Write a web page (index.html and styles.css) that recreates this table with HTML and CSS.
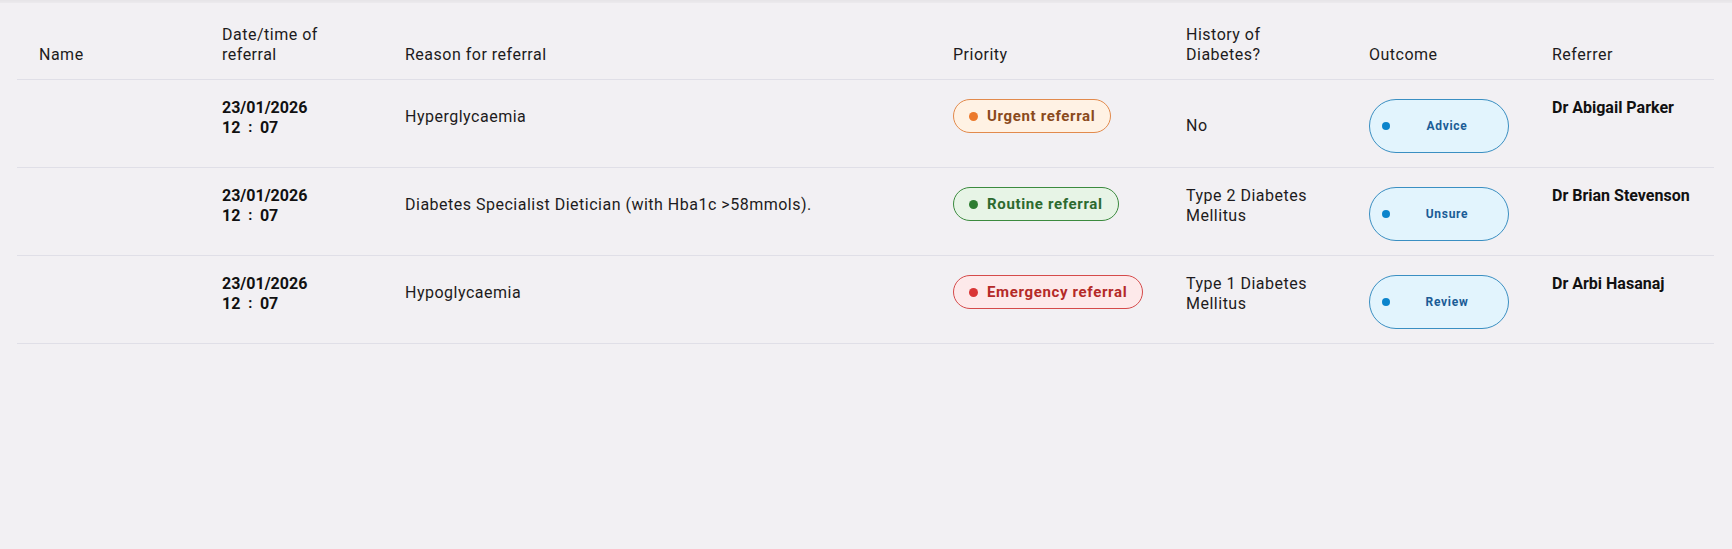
FILE: index.html
```html
<!DOCTYPE html>
<html lang="en">
<head>
<meta charset="utf-8">
<title>Referrals</title>
<link rel="stylesheet" href="styles.css">
</head>
<body>
<div class="topbar"></div>
<div class="table">
  <div class="row head">
    <div class="cell">Name</div>
    <div class="cell">Date/time of referral</div>
    <div class="cell">Reason for referral</div>
    <div class="cell">Priority</div>
    <div class="cell">History of Diabetes?</div>
    <div class="cell">Outcome</div>
    <div class="cell">Referrer</div>
  </div>

  <div class="row">
    <div class="cell"></div>
    <div class="cell date"><div>23/01/2026</div><div>12<span class="colon">:</span>07</div></div>
    <div class="cell reason">Hyperglycaemia</div>
    <div class="cell priority"><span class="pill urgent"><span class="dot"></span>Urgent referral</span></div>
    <div class="cell history single">No</div>
    <div class="cell outcome"><span class="opill"><span class="dot"></span><span class="otext">Advice</span></span></div>
    <div class="cell referrer">Dr Abigail Parker</div>
  </div>

  <div class="row">
    <div class="cell"></div>
    <div class="cell date"><div>23/01/2026</div><div>12<span class="colon">:</span>07</div></div>
    <div class="cell reason">Diabetes Specialist Dietician (with Hba1c &gt;58mmols).</div>
    <div class="cell priority"><span class="pill routine"><span class="dot"></span>Routine referral</span></div>
    <div class="cell history">Type 2 Diabetes Mellitus</div>
    <div class="cell outcome"><span class="opill"><span class="dot"></span><span class="otext">Unsure</span></span></div>
    <div class="cell referrer">Dr Brian Stevenson</div>
  </div>

  <div class="row">
    <div class="cell"></div>
    <div class="cell date"><div>23/01/2026</div><div>12<span class="colon">:</span>07</div></div>
    <div class="cell reason">Hypoglycaemia</div>
    <div class="cell priority"><span class="pill emergency"><span class="dot"></span>Emergency referral</span></div>
    <div class="cell history">Type 1 Diabetes Mellitus</div>
    <div class="cell outcome"><span class="opill"><span class="dot"></span><span class="otext">Review</span></span></div>
    <div class="cell referrer">Dr Arbi Hasanaj</div>
  </div>
</div>
</body>
</html>
```

FILE: styles.css
```css
html, body {
  margin: 0;
  padding: 0;
  background: #f2f0f3;
}

body {
  font-family: Roboto, "Liberation Sans", sans-serif;
  font-size: 16px;
  line-height: 20px;
  letter-spacing: 0.5px;
  color: #1d1b20;
}

.topbar {
  height: 3px;
  background: linear-gradient(#e6e4e7, #eceaed);
}

.table {
  padding: 0 18px 0 17px;
}

.row {
  display: grid;
  grid-template-columns: 183px 183px 548px 233px 183px 183px 1fr;
  align-items: start;
  height: 88px;
  box-sizing: border-box;
  border-bottom: 1px solid #e0dfe7;
}

.row.head {
  height: 77px;
  align-items: end;
  padding-bottom: 14.5px;
}

.cell {
  padding: 0 16px 0 22px;
  min-width: 0;
}

.date {
  padding-top: 18px;
  font-weight: 700;
  letter-spacing: 0;
  color: #111;
}

.colon {
  display: inline-block;
  margin: 0 7px 0 8px;
  transform: translateY(-1px) scale(0.9);
}

.reason {
  padding-top: 27px;
}

.priority {
  padding-top: 19px;
}

.history {
  padding-top: 18px;
}

.history.single {
  padding-top: 36px;
}

.outcome {
  padding-top: 19px;
}

.referrer {
  padding-top: 18px;
  font-weight: 700;
  letter-spacing: 0;
  color: #111;
}

.pill {
  display: inline-flex;
  align-items: center;
  gap: 9px;
  height: 34px;
  box-sizing: border-box;
  padding: 0 15px;
  border: 1px solid;
  border-radius: 17px;
  font-size: 15px;
  font-weight: 700;
  letter-spacing: 0.65px;
  white-space: nowrap;
}

.pill .dot {
  width: 9px;
  height: 9px;
  border-radius: 50%;
  flex: none;
}

.urgent {
  background: #fff2e4;
  border-color: #e28a4c;
  color: #8a4a1c;
}
.urgent .dot { background: #ec7a2c; }

.routine {
  background: #e7f4e6;
  border-color: #3b8a3e;
  color: #2c6a2f;
}
.routine .dot { background: #2e7d32; }

.emergency {
  background: #fde9ea;
  border-color: #d54a4a;
  color: #b42a28;
}
.emergency .dot { background: #d93636; }

.opill {
  display: flex;
  align-items: center;
  width: 140px;
  height: 54px;
  box-sizing: border-box;
  padding: 0 12px;
  border: 1px solid #3a8fc2;
  border-radius: 27px;
  background: #e2f4fd;
  gap: 8px;
}

.opill .dot {
  width: 8px;
  height: 8px;
  border-radius: 50%;
  background: #0b84cc;
  flex: none;
}

.otext {
  flex: 1;
  text-align: center;
  font-size: 12px;
  font-weight: 700;
  letter-spacing: 0.7px;
  color: #1b5c96;
}
```
